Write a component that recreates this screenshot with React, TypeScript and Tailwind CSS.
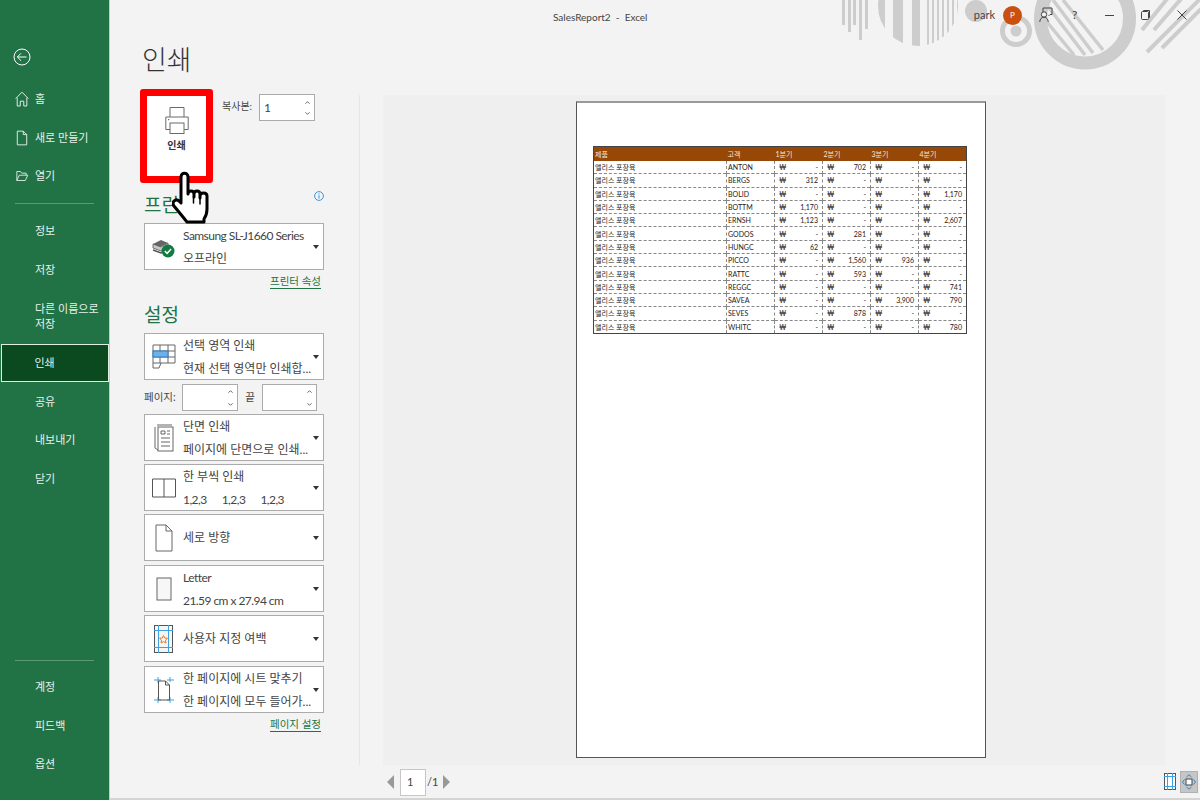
import { ReactNode } from "react";

const NAV_TOP = [
  { label: "정보" },
  { label: "저장" },
  { label: "다른 이름으로\n저장", tall: true },
  { label: "인쇄", active: true },
  { label: "공유" },
  { label: "내보내기" },
  { label: "닫기" },
];

const ROWS: [string, string, string, string, string][] = [
  ["ANTON", "-", "702", "-", "-"],
  ["BERGS", "312", "-", "-", "-"],
  ["BOLID", "-", "-", "-", "1,170"],
  ["BOTTM", "1,170", "-", "-", "-"],
  ["ERNSH", "1,123", "-", "-", "2,607"],
  ["GODOS", "-", "281", "-", "-"],
  ["HUNGC", "62", "-", "-", "-"],
  ["PICCO", "-", "1,560", "936", "-"],
  ["RATTC", "-", "593", "-", "-"],
  ["REGGC", "-", "-", "-", "741"],
  ["SAVEA", "-", "-", "3,900", "790"],
  ["SEVES", "-", "878", "-", "-"],
  ["WHITC", "-", "-", "-", "780"],
];

function HomeIcon() {
  return (
    <svg width="14" height="16" viewBox="0 0 16 18" fill="none" stroke="#e4efe9" strokeWidth="1.1">
      <path d="M0.8 8.5 8 1.2l7.2 7.3M2.5 7.5v9.5h3.500v-5.500h4V17h3.500V7.500" />
    </svg>
  );
}

function NewIcon() {
  return (
    <svg width="12" height="16" viewBox="0 0 14 18" fill="none" stroke="#e4efe9" strokeWidth="1.1">
      <path d="M1.500 1h7l4 4v12h-11zM8.500 1v4h4" />
    </svg>
  );
}

function OpenIcon() {
  return (
    <svg width="13" height="12" viewBox="0 0 16 14" fill="none" stroke="#e4efe9" strokeWidth="1.100">
      <path d="M1 12.500V1.500h4.500l1.500 2h5.500v2.500M1 12.500h10.500l3-6.500H4z" />
    </svg>
  );
}

function NavRow({ label, active, tall }: { label: string; active?: boolean; tall?: boolean }) {
  return (
    <div
      className={`flex items-center text-[11px] leading-[15px] whitespace-pre-line ${tall ? "h-[55px]" : "h-[38.5px]"} ${
        active
          ? "bg-[#0a4a1e] border-[1.5px] border-[#e0eee0] text-[#e8f1ec] ml-px w-[108px] pl-[32.5px]"
          : "text-[#e8f1ec] pl-[35px]"
      }`}
    >
      {label}
    </div>
  );
}

function Sidebar() {
  return (
    <aside className="w-[110px] shrink-0 h-full bg-[#217346] border-r border-[#c9c9c9] flex flex-col">
      <div className="pl-[13px] pt-[48px] h-[80px]">
        <svg width="18" height="18" viewBox="0 0 18 18" fill="none" stroke="#fff" strokeWidth="1">
          <circle cx="9" cy="9" r="8" />
          <path d="M13.500 9h-9M8 5.300 4.300 9 8 12.700" />
        </svg>
      </div>
      {[
        { label: "홈", icon: <HomeIcon /> },
        { label: "새로 만들기", icon: <NewIcon /> },
        { label: "열기", icon: <OpenIcon /> },
      ].map((it) => (
        <div key={it.label} className="h-[38.5px] flex items-center text-[11px] text-[#e8f1ec]">
          <span className="w-[35px] flex justify-center pl-[9px]">{it.icon}</span>
          {it.label}
        </div>
      ))}
      <div className="mx-[15px] mt-[7px] mb-[8px] h-px bg-[#5a9a76]" />
      {NAV_TOP.map((n) => (
        <NavRow key={n.label} label={n.label} active={n.active} tall={n.tall} />
      ))}
      <div className="mt-auto">
        <div className="mx-[15px] mb-[7px] h-px bg-[#5a9a76]" />
        <NavRow label="계정" />
        <NavRow label="피드백" />
        <NavRow label="옵션" />
        <div className="h-[17px]" />
      </div>
    </aside>
  );
}

function HeaderArt() {
  return (
    <svg className="absolute right-0 top-0" width="360" height="72" viewBox="840 0 360 72" fill="#cdcdcd">
      <defs>
        <clipPath id="half">
          <circle cx="918" cy="6" r="40" />
        </clipPath>
        <clipPath id="ring">
          <circle cx="1085" cy="18.500" r="40" />
        </clipPath>
      </defs>
      <rect x="842" y="0" width="3" height="25" />
      <rect x="848" y="0" width="3" height="32" />
      <rect x="853" y="0" width="3" height="25" />
      <rect x="859" y="0" width="3" height="40" />
      <rect x="865" y="0" width="3" height="29" />
      <g clipPath="url(#half)">
        <rect x="878" y="0" width="7" height="50" />
        <rect x="893" y="0" width="10" height="50" />
        <rect x="912" y="0" width="8" height="50" />
        <rect x="927" y="0" width="2" height="50" />
        <rect x="932" y="0" width="2" height="50" />
        <rect x="937" y="0" width="2" height="50" />
        <rect x="942" y="0" width="2" height="50" />
        <rect x="947" y="0" width="2" height="50" />
        <rect x="952" y="0" width="2" height="50" />
        <rect x="957" y="0" width="2" height="50" />
      </g>
      <circle cx="976" cy="11" r="11" />
      <circle cx="1016" cy="31" r="13.500" fill="none" stroke="#cdcdcd" strokeWidth="5" />
      <circle cx="1016" cy="31" r="5.500" />
      <circle cx="1085" cy="18.500" r="44.500" fill="none" stroke="#cdcdcd" strokeWidth="13" />
      <g clipPath="url(#ring)" stroke="#cdcdcd" strokeWidth="3.500" fill="none">
        <path d="M1063 0 1103 50M1053 0 1093 53M1043 0 1085 55M1047 22 1074 55" />
      </g>
      <g stroke="#cdcdcd" strokeWidth="4" fill="none">
        <path d="M1142 30 1167 -1M1154 30 1181 -1M1147 52 1200 -1M1162 48 1201 9" />
      </g>
    </svg>
  );
}

function TitleBar() {
  return (
    <header className="relative z-10 h-[34px] flex items-center text-[10px] text-[#444]">
      <span className="ml-[443px] whitespace-pre">SalesReport2  -  Excel</span>
      <div className="ml-auto flex items-center -mt-[4px]">
        <span className="text-[11px] text-[#444] mr-[8px]">park</span>
        <span className="w-[19px] h-[19px] rounded-full bg-[#ca5010] text-white text-[8px] flex items-center justify-center">P</span>
        <svg className="ml-[17px]" width="14" height="16" viewBox="0 0 14 16" fill="none" stroke="#444" strokeWidth="1">
          <path d="M4 5V1h9v6.500h-2L9.500 9" />
          <circle cx="5" cy="7.500" r="2.700" fill="#f3f3f3" />
          <path d="M0.800 15c0-3 1.800-4.800 4.200-4.800S9.200 12 9.200 15" />
        </svg>
        <span className="ml-[19px] text-[12px] text-[#444] w-[8px]">?</span>
        <svg className="ml-[25px]" width="9" height="9" viewBox="0 0 9 9" stroke="#444" strokeWidth="1">
          <path d="M0 4.500h9" />
        </svg>
        <svg className="ml-[27px]" width="9" height="10" viewBox="0 0 9 10" fill="none" stroke="#444" strokeWidth="1">
          <path d="M2.500 1.500V.500h6v7H7.500" />
          <rect x=".5" y="1.500" width="7" height="8" rx="1" />
        </svg>
        <svg className="ml-[27px] mr-[13px]" width="10" height="10" viewBox="0 0 10 10" stroke="#444" strokeWidth="1">
          <path d="M.5.500l9 9M9.500.500l-9 9" />
        </svg>
      </div>
    </header>
  );
}

function Spinner({ gap }: { gap: string }) {
  return (
    <div className={`flex flex-col justify-center items-center w-[13px] shrink-0 ${gap}`}>
      <svg width="5" height="3" viewBox="0 0 5 3" fill="none" stroke="#666"><path d="M.5 2.700 2.500.7l2 2" /></svg>
      <svg width="5" height="3" viewBox="0 0 5 3" fill="none" stroke="#666"><path d="M.5.300l2 2 2-2" /></svg>
    </div>
  );
}

function PrinterIcon() {
  return (
    <svg width="24" height="27" viewBox="0 0 24 27" fill="none" stroke="#6a6a6a" strokeWidth="1">
      <path d="M5 10V.5h14V10" />
      <path d="M5 22.500H.8V10h22.400v12.500H19" />
      <rect x="5" y="16" width="14" height="10.500" fill="#fff" />
      <rect x="3" y="12" width="1.200" height="1.200" fill="#6a6a6a" stroke="none" />
    </svg>
  );
}

function Dropdown({ icon, lines, h, mt }: { icon: ReactNode; lines: string[]; h: string; mt: string }) {
  return (
    <div className={`${h} ${mt} w-[180px] bg-white border border-[#ababab] flex items-center relative`}>
      <div className="w-[38px] shrink-0 flex justify-center">{icon}</div>
      <div className="flex flex-col gap-[6px] text-[12px] leading-[17px] text-[#444] whitespace-pre">
        {lines.map((l) => (
          // the Latin lines run narrower than Lato in the screenshot
          <span key={l} className={/^[\x00-\x7f]+$/.test(l) ? "tracking-[-0.55px]" : ""}>
            {l}
          </span>
        ))}
      </div>
      <span className="absolute right-[4px] top-1/2 -translate-y-1/2 w-0 h-0 border-x-[3.5px] border-x-transparent border-t-[4px] border-t-[#333]" />
    </div>
  );
}

function LinkText({ children }: { children: ReactNode }) {
  return <span className="text-[10.5px] leading-[13px] text-[#217346] border-b border-[#217346]">{children}</span>;
}

const IconPrinterOk = (
  <svg width="24" height="24" viewBox="0 0 24 24">
    <path d="M1 9 9 5l7 3-8 4z" fill="#666" />
    <path d="M1 9v4l8 3 7-3V8l-7 4z" fill="#c9c9c9" stroke="#555" strokeWidth=".8" />
    <path d="M1 15l8 3 5-2" fill="none" stroke="#555" strokeWidth="1.400" />
    <circle cx="16" cy="16" r="6.500" fill="#107c41" />
    <path d="M12.800 16l2.300 2.300 4-4.300" fill="none" stroke="#fff" strokeWidth="1.500" />
  </svg>
);

const IconSelection = (
  <svg width="24" height="26" viewBox="0 0 24 26" fill="none" stroke="#666" strokeWidth="1">
    <path d="M1 1h22v18H1zM1 7h22M1 13h22M8 1v18M16 1v18" />
    <rect x="1" y="7" width="15" height="6" fill="#6fb1e6" stroke="#2a7fc8" />
    <path d="M1 19v5h6l2-5" />
  </svg>
);

const IconOneSided = (
  <svg width="20" height="28" viewBox="0 0 20 28" fill="none" stroke="#666" strokeWidth="1">
    <path d="M1 3v21l3 2" />
    <path d="M3 1h15" />
    <rect x="4" y="3" width="15" height="24" fill="#fff" />
    <path d="M7 7h4v3H7zM13 7h3M13 10h3M7 14h9M7 18h9M7 22h9" />
  </svg>
);

const IconCollate = (
  <svg width="24" height="20" viewBox="0 0 24 20" fill="none" stroke="#555" strokeWidth="1">
    <path d="M.5 1h23v18H.5zM12 1v18" />
  </svg>
);

const IconPortrait = (
  <svg width="18" height="28" viewBox="0 0 18 28" fill="#fff" stroke="#666" strokeWidth="1">
    <path d="M1 1h10l6 6v20H1zM11 1v6h6" />
  </svg>
);

const IconLetter = (
  <svg width="16" height="24" viewBox="0 0 16 24" fill="#f7f7f7" stroke="#666" strokeWidth="1">
    <rect x="1" y="1" width="14" height="22" />
  </svg>
);

const IconMargins = (
  <svg width="20" height="28" viewBox="0 0 20 28" fill="#f5f5f5">
    <rect x=".5" y=".5" width="18" height="27" stroke="#555" />
    <path d="M4.500 0v28M14.500 0v28M0 5.500h19M0 22.500h19" stroke="#3fa0e0" strokeWidth="1" />
    <path d="M9.500 10.500l1.200 2.500 2.800.3-2 1.900.5 2.800-2.500-1.400-2.500 1.400.5-2.800-2-1.900 2.800-.3z" fill="none" stroke="#e8791a" strokeWidth="1" />
  </svg>
);

const IconFit = (
  <svg width="20" height="28" viewBox="0 0 20 28" fill="none" strokeWidth="1">
    <path d="M4 1v6M0 4h7M16 1v5M13 4h7M4 21v6M0 24h7M16 21v6M13 24h7" stroke="#3fa0e0" />
    <path d="M4.500 5h7l4 4v15h-11zM11.500 5v4h4" stroke="#555" />
  </svg>
);

function PrintColumn() {
  return (
    <div className="w-[249px] shrink-0 pl-[31px]">
      <h1 className="text-[27px] leading-[40px] text-[#333] font-light pt-[6px] ml-px">인쇄</h1>
      <div className="flex mt-[9px] -ml-px">
        <button className="w-[73px] h-[94px] bg-white border-[7px] border-[#ff0000] rounded-[3px] flex flex-col items-center pt-[11px]">
          <PrinterIcon />
          <span className="text-[10px] font-bold text-[#333] mt-[4px]">인쇄</span>
        </button>
        <div className="flex items-start pt-[5px] ml-[9px]">
          <span className="text-[10px] text-[#444] mt-[5px]">복사본:</span>
          <div className="ml-[7px] w-[56px] h-[27px] bg-white border border-[#ababab] flex items-center justify-between text-[12px] text-[#444] pl-[4px]">
            1
            <Spinner gap="gap-[8px]" />
          </div>
        </div>
      </div>
      <div className="w-[180px] ml-[3px] mt-[8px] flex justify-between items-start h-[32px]">
        <span className="text-[19px] leading-[28px] text-[#217346]">프린터</span>
        <svg width="10" height="10" viewBox="0 0 10 10" fill="none">
          <circle cx="5" cy="5" r="4.400" stroke="#3a96dd" />
          <path d="M5 2.300v1M5 4.200v3.400" stroke="#3a96dd" />
        </svg>
      </div>
      <div className="ml-[3px]">
        <Dropdown h="h-[47px]" mt="" icon={IconPrinterOk} lines={["Samsung SL-J1660 Series", "오프라인"]} />
        <div className="w-[177px] flex justify-end mt-[5px]">
          <LinkText>프린터 속성</LinkText>
        </div>
        <div className="text-[19px] leading-[28px] text-[#217346] mt-[12px]">설정</div>
        <Dropdown h="h-[47px]" mt="mt-[4px]" icon={IconSelection} lines={["선택 영역 인쇄", "현재 선택 영역만 인쇄합..."]} />
        <div className="flex items-center h-[27px] mt-[4px] text-[10.5px] text-[#444]">
          <span className="w-[38px]">페이지:</span>
          <div className="w-[56px] h-full bg-white border border-[#ababab] flex justify-end">
            <Spinner gap="gap-[10px]" />
          </div>
          <span className="w-[24px] text-center">끝</span>
          <div className="w-[55px] h-full bg-white border border-[#ababab] flex justify-end">
            <Spinner gap="gap-[10px]" />
          </div>
        </div>
        <Dropdown h="h-[47px]" mt="mt-[3px]" icon={IconOneSided} lines={["단면 인쇄", "페이지에 단면으로 인쇄..."]} />
        <Dropdown h="h-[47px]" mt="mt-[3px]" icon={IconCollate} lines={["한 부씩 인쇄", "1,2,3      1,2,3      1,2,3"]} />
        <Dropdown h="h-[47px]" mt="mt-[3px]" icon={IconPortrait} lines={["세로 방향"]} />
        <Dropdown h="h-[47px]" mt="mt-[4px]" icon={IconLetter} lines={["Letter", "21.59 cm x 27.94 cm"]} />
        <Dropdown h="h-[47px]" mt="mt-[3px]" icon={IconMargins} lines={["사용자 지정 여백"]} />
        <Dropdown h="h-[47px]" mt="mt-[4px]" icon={IconFit} lines={["한 페이지에 시트 맞추기", "한 페이지에 모두 들어가..."]} />
        <div className="w-[177px] flex justify-end mt-[5px]">
          <LinkText>페이지 설정</LinkText>
        </div>
      </div>
    </div>
  );
}

function MoneyCell({ v }: { v: string }) {
  return (
    <td className="border-l border-dashed border-[#888] px-[4px]">
      <div className="flex justify-between">
        <span>₩</span>
        <span>{v}</span>
      </div>
    </td>
  );
}

function SalesTable() {
  return (
    <table className="w-[373px] table-fixed border-collapse border border-[#444] text-[7px] leading-[12px] text-[#222]">
      <colgroup>
        <col className="w-[133px]" />
        <col className="w-[48px]" />
        <col className="w-[48px]" />
        <col className="w-[48px]" />
        <col className="w-[48px]" />
        <col className="w-[48px]" />
      </colgroup>
      <thead>
        <tr className="bg-[#974706] text-[#f4e6da] h-[14px]">
          {["제품", "고객", "1분기", "2분기", "3분기", "4분기"].map((h) => (
            <th key={h} className="font-normal text-left pl-[1px]">
              {h}
            </th>
          ))}
        </tr>
      </thead>
      <tbody>
        {ROWS.map((r) => (
          <tr key={r[0]} className="h-[13.3px] border-b border-dashed border-[#888] last:border-b-0">
            <td className="pl-[1px]">앨리스 포장육</td>
            <td className="border-l border-dashed border-[#888] pl-[1px]">{r[0]}</td>
            <MoneyCell v={r[1]} />
            <MoneyCell v={r[2]} />
            <MoneyCell v={r[3]} />
            <MoneyCell v={r[4]} />
          </tr>
        ))}
      </tbody>
    </table>
  );
}

function Preview() {
  return (
    <div className="flex-1 flex flex-col min-w-0">
      <div className="mt-[61px] h-[670px] flex border-l border-[#e6e6e6] pl-[23px]">
        <div className="flex-1 mr-[35px] bg-[#efefef]">
          <div className="w-[410px] h-[657px] mt-[6px] ml-[193px] bg-white border border-[#555] border-t-2 border-t-[#999] pt-[43px] pl-[16px]">
            <SalesTable />
          </div>
        </div>
      </div>
      <div className="flex items-center h-[28px] mt-[3px] pl-[28px] pr-[2px]">
        <span className="w-0 h-0 border-y-[7px] border-y-transparent border-r-[7px] border-r-[#999]" />
        <div className="ml-[6px] w-[26px] h-[27px] bg-white border border-[#c6c6c6] flex items-center pl-[6px] text-[11px] text-[#444]">1</div>
        <span className="text-[11px] text-[#444] ml-[1px]">/1</span>
        <span className="ml-[5px] w-0 h-0 border-y-[7px] border-y-transparent border-l-[7px] border-l-[#999]" />
        <div className="ml-auto flex items-center gap-[3px]">
          <svg width="13" height="18" viewBox="0 0 13 18" fill="#fff">
            <rect x=".5" y=".5" width="11" height="16" stroke="#555" />
            <path d="M3.500 0v17M8.500 0v17M0 3.500h12M0 13.500h12" stroke="#3fa0e0" />
          </svg>
          <div className="w-[18px] h-[22px] bg-[#c6c6c6] border border-[#b0b0b0] flex items-center justify-center">
            <svg width="14" height="16" viewBox="0 0 14 16" fill="none">
              <rect x="4" y="5" width="6" height="6" fill="#fff" stroke="#444" strokeWidth="1" />
              <path d="M4.500 3 7 .8 9.500 3M4.500 13 7 15.200 9.500 13M2.500 5.500.5 8l2 2.500M11.500 5.500l2 2.500-2 2.500" stroke="#2a86d0" strokeWidth="1" />
            </svg>
          </div>
        </div>
      </div>
    </div>
  );
}

function HandCursor() {
  return (
    <svg className="absolute left-[172px] top-[171px] z-20" width="40" height="57" viewBox="0 0 40 57" fill="#fff" stroke="#000" strokeWidth="3" strokeLinejoin="round" strokeLinecap="round">
      <path d="M9 32V6c0-5 7-5 7 0v17c0-4 6-4 6 0v3-3c0-4 6-4 6 0v4-2c0-4 7-4 7 0v13c0 4-1 7-3 10v3H15l-4-5L2 35c-3-4 2-8 5-5z" />
      <path d="M21.500 26v6M28 27v6" strokeWidth="1.500" />
    </svg>
  );
}

export default function App() {
  return (
    <div className="relative w-[1200px] h-[800px] overflow-hidden flex bg-[#f3f3f3] font-['Lato','Noto_Sans_CJK_KR',sans-serif]">
      <Sidebar />
      <div className="relative flex-1 min-w-0 flex flex-col h-[798px]">
        <HeaderArt />
        <TitleBar />
        <div className="flex flex-1 min-h-0">
          <PrintColumn />
          <Preview />
        </div>
      </div>
      <HandCursor />
      <div className="absolute left-[110px] right-0 bottom-0 h-[2px] bg-[#d4d4d4]" />
    </div>
  );
}
